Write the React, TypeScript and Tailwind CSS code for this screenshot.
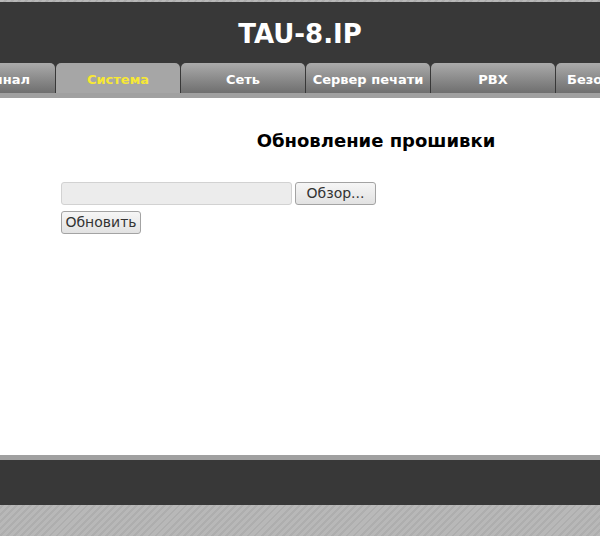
const tabs = ["Терминал", "Система", "Сеть", "Сервер печати", "PBX", "Безопасность"];

const stripes =
  "bg-[repeating-linear-gradient(135deg,#b8b8b8_0px,#b8b8b8_3px,#aeaeae_3px,#aeaeae_5px)]";

export default function App() {
  return (
    <div
      className={`w-[600px] h-[536px] flex flex-col overflow-hidden ${stripes}`}
      style={{ fontFamily: '"DejaVu Sans", Verdana, sans-serif' }}
    >
      <div className="h-[2px]" />
      <header className="bg-[#383838] flex flex-col">
        <h1 className="h-[61px] flex items-center justify-center text-white text-[26px] font-bold pt-[3px]">
          TAU-8.IP
        </h1>
        <nav className="h-[30px] overflow-hidden">
          <ul className="flex gap-px ml-[-69px] w-max">
            {tabs.map((t) => {
              const active = t === "Система";
              return (
                <li
                  key={t}
                  className={
                    "w-[124px] h-[30px] rounded-t-[5px] flex items-center justify-center pt-[3px] text-[13px] font-bold whitespace-nowrap " +
                    (active
                      ? "bg-[#a6a6a6] text-[#f7e834]"
                      : "bg-linear-to-b from-[#ababab] to-[#6f6f6f] text-white")
                  }
                >
                  {t}
                </li>
              );
            })}
          </ul>
        </nav>
      </header>
      <div className="h-[5px] bg-[#a0a0a0]" />
      <main className="h-[357px] bg-white flex flex-col">
        <h2 className="pl-[152px] text-center text-[18px] font-bold text-black mt-[29px]">
          Обновление прошивки
        </h2>
        <div className="flex flex-col gap-[6px] pl-[61px] mt-[28px] text-[14px] text-[#333]">
          <div className="flex gap-[3px]">
            <div className="w-[231px] h-[23px] rounded-[3px] bg-[#ececec] border border-[#d2d2d2]" />
            <button className="w-[81px] h-[23px] rounded-[3px] border border-[#a3a3a3] bg-linear-to-b from-[#f6f6f6] to-[#e2e2e2]">
              Обзор...
            </button>
          </div>
          <div>
            <button className="w-[80px] h-[23px] rounded-[3px] border border-[#a3a3a3] bg-linear-to-b from-[#f6f6f6] to-[#e2e2e2]">
              Обновить
            </button>
          </div>
        </div>
      </main>
      <div className="h-[5px] bg-[#a0a0a0]" />
      <footer className="h-[45px] bg-[#383838]" />
    </div>
  );
}
